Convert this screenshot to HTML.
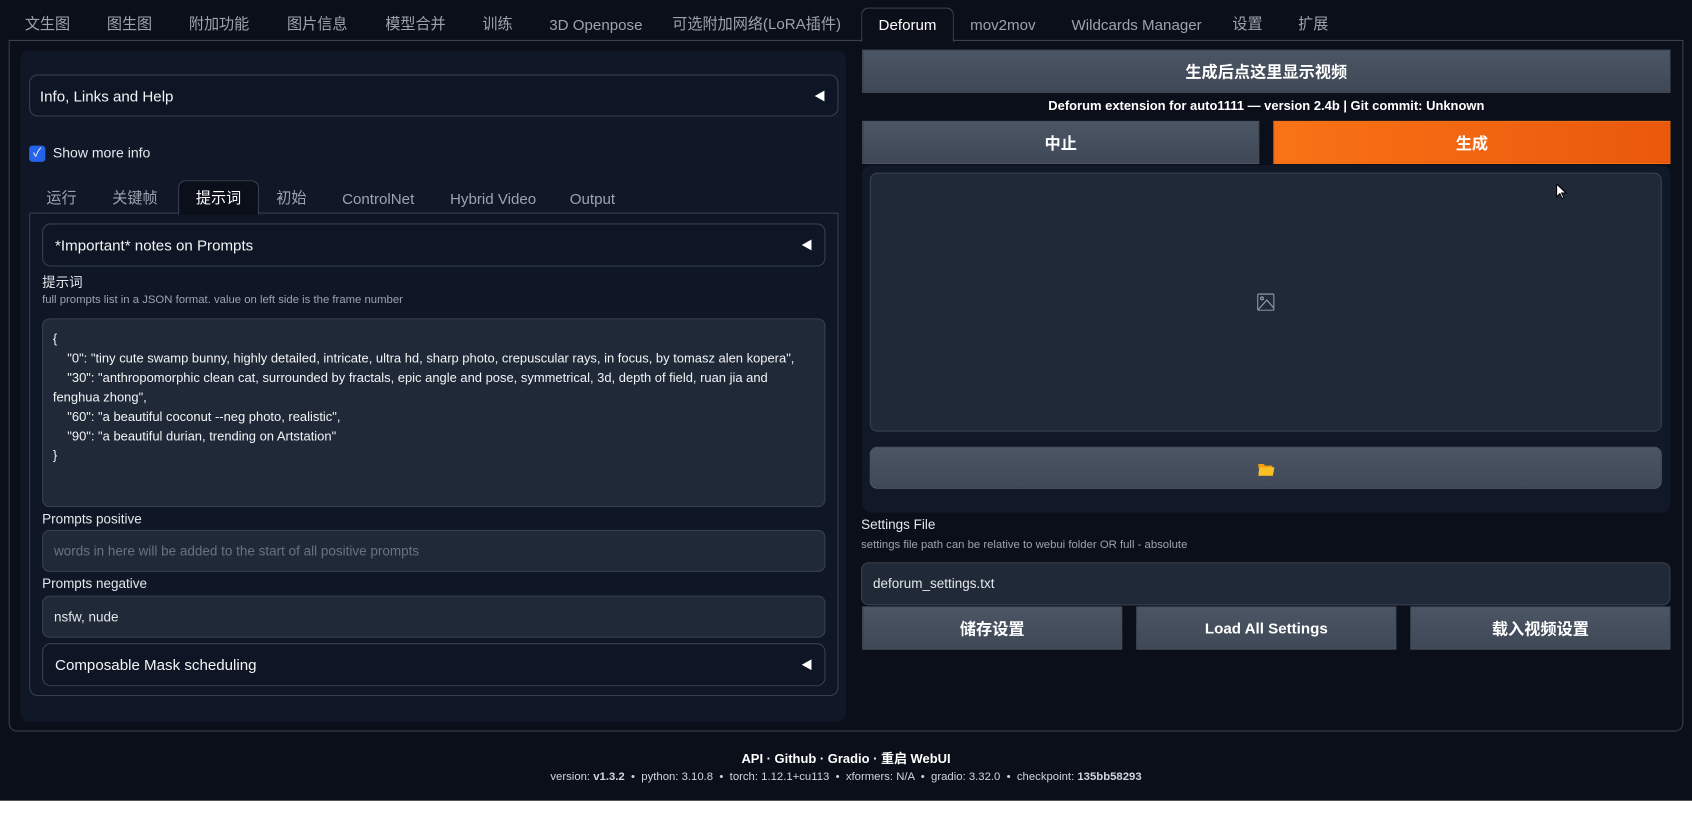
<!DOCTYPE html>
<html><head><meta charset="utf-8"><style>
*{box-sizing:border-box;margin:0;padding:0}
html,body{width:1692px;height:832px;overflow:hidden;background:#fff}
#w{position:absolute;left:0;top:0;width:1568px;height:771px;transform:scale(1.0791);transform-origin:0 0;font-family:"Liberation Sans","Noto Sans CJK SC",sans-serif;color:#e5e7eb}
.bg{position:absolute;left:0;top:0;width:1568px;height:742px;background:#0b0f19}
.a{position:absolute;white-space:nowrap}
.t{font-size:14px;color:#9ca3af;top:12px;line-height:20px;height:20px}
.box{position:absolute;border:1px solid #374151;border-radius:8px}
.acc{position:absolute;border:1px solid #374151;border-radius:8px;background:#0e1524;font-size:14px;color:#f3f4f6;padding-left:11px;display:flex;align-items:center}
.tri{position:absolute;right:12px;top:50%;margin-top:-5px;width:0;height:0;border-top:5px solid transparent;border-bottom:5px solid transparent;border-right:9px solid #fff}
.inp{position:absolute;background:#1f2937;border:1px solid #374151;border-radius:7px;font-size:12.5px;padding-left:10px;display:flex;align-items:center;color:#e5e7eb}
.btn{position:absolute;background:linear-gradient(#4b5563,#3f4856);border:1px solid #4b5563;font-weight:bold;font-size:15px;color:#fff;display:flex;align-items:center;justify-content:center}
.lbl{font-size:12.5px;color:#e5e7eb}
.hint{font-size:10.5px;color:#9ca3af}
</style></head><body><div id="w">
<div class="bg"></div>
<div class="a t" style="left:23px">文生图</div>
<div class="a t" style="left:99px">图生图</div>
<div class="a t" style="left:175px">附加功能</div>
<div class="a t" style="left:266px">图片信息</div>
<div class="a t" style="left:357px">模型合并</div>
<div class="a t" style="left:447px">训练</div>
<div class="a t" style="left:509px;top:13px">3D Openpose</div>
<div class="a t" style="left:623px">可选附加网络(LoRA插件)</div>
<div class="a" style="left:798px;top:7px;width:86px;height:32px;border:1px solid #374151;border-bottom:none;border-radius:7px 7px 0 0;background:#0b0f19;z-index:2;font-size:14px;color:#fff;text-align:center;line-height:30px">Deforum</div>
<div class="a t" style="left:899px;top:13px">mov2mov</div>
<div class="a t" style="left:993px;top:13px">Wildcards Manager</div>
<div class="a t" style="left:1142px">设置</div>
<div class="a t" style="left:1203px">扩展</div>
<div class="box" style="left:8px;top:37px;width:1552px;height:641px;border-radius:0 0 8px 8px"></div>
<div class="a" style="left:19px;top:47px;width:765px;height:622px;background:#101828;border-radius:8px"></div>
<div class="acc" style="left:27px;top:69px;width:750px;height:39px;padding-left:9px">Info, Links and Help<div class="tri"></div></div>
<div class="a" style="left:27px;top:135px;width:15px;height:15px;background:#2563eb;border-radius:3px;color:#fff;font-size:11px;text-align:center;line-height:15px">✓</div>
<div class="a lbl" style="left:49px;top:134px;font-size:13px">Show more info</div>
<div class="a t" style="left:43px;top:173px">运行</div>
<div class="a t" style="left:104px;top:173px">关键帧</div>
<div class="a" style="left:165px;top:167px;width:75px;height:32px;border:1px solid #374151;border-bottom:none;border-radius:7px 7px 0 0;background:#0b0f19;z-index:2;font-size:14px;color:#fff;text-align:center;line-height:30px">提示词</div>
<div class="a t" style="left:256px;top:173px">初始</div>
<div class="a t" style="left:317px;top:174px">ControlNet</div>
<div class="a t" style="left:417px;top:174px">Hybrid Video</div>
<div class="a t" style="left:528px;top:174px">Output</div>
<div class="box" style="left:27px;top:197px;width:750px;height:448px;border-radius:0 0 8px 8px;background:#0f1626"></div>
<div class="acc" style="left:39px;top:207px;width:726px;height:40px">*Important* notes on Prompts<div class="tri"></div></div>
<div class="a lbl" style="left:39px;top:251px">提示词</div>
<div class="a hint" style="left:39px;top:272px">full prompts list in a JSON format. value on left side is the frame number</div>
<div class="a" style="left:39px;top:295px;width:726px;height:175px;background:#1f2937;border:1px solid #374151;border-radius:7px;font-size:12px;line-height:18px;padding:9px 9px;white-space:normal;color:#f3f4f6">{<br>&nbsp;&nbsp;&nbsp;&nbsp;"0": "tiny cute swamp bunny, highly detailed, intricate, ultra hd, sharp photo, crepuscular rays, in focus, by tomasz alen kopera",<br>&nbsp;&nbsp;&nbsp;&nbsp;"30": "anthropomorphic clean cat, surrounded by fractals, epic angle and pose, symmetrical, 3d, depth of field, ruan jia and fenghua zhong",<br>&nbsp;&nbsp;&nbsp;&nbsp;"60": "a beautiful coconut --neg photo, realistic",<br>&nbsp;&nbsp;&nbsp;&nbsp;"90": "a beautiful durian, trending on Artstation"<br>}</div>
<div class="a lbl" style="left:39px;top:474px">Prompts positive</div>
<div class="inp" style="left:39px;top:491px;width:726px;height:39px;color:#6b7280">words in here will be added to the start of all positive prompts</div>
<div class="a lbl" style="left:39px;top:534px">Prompts negative</div>
<div class="inp" style="left:39px;top:552px;width:726px;height:39px">nsfw, nude</div>
<div class="acc" style="left:39px;top:596px;width:726px;height:40px">Composable Mask scheduling<div class="tri"></div></div>
<div class="btn" style="left:799px;top:46px;width:749px;height:40px">生成后点这里显示视频</div>
<div class="a" style="left:799px;top:91px;width:749px;text-align:center;font-size:12px;font-weight:bold;color:#fff">Deforum extension for auto1111 — version 2.4b | Git commit: Unknown</div>
<div class="btn" style="left:799px;top:112px;width:368px;height:40px">中止</div>
<div class="btn" style="left:1180px;top:112px;width:368px;height:40px;background:linear-gradient(90deg,#f97316,#ea580c);border-color:#f97316">生成</div>
<div class="a" style="left:799px;top:153px;width:749px;height:322px;background:#111827;border-radius:8px"></div>
<div class="a" style="left:806px;top:160px;width:734px;height:240px;background:#1f2937;border:1px solid #374151;border-radius:7px"></div>
<svg class="a" style="left:1165px;top:272px" width="16" height="16" viewBox="0 0 16 16" fill="none" stroke="#9ca3af" stroke-width="1"><rect x="0.5" y="0.5" width="15" height="15" rx="1"/><circle cx="4.5" cy="4.5" r="1.3"/><path d="M1 15 L9 6 L15 13"/></svg>
<div class="a" style="left:806px;top:414px;width:734px;height:39px;background:linear-gradient(#4b5563,#3f4856);border:1px solid #4b5563;border-radius:7px"></div>
<svg class="a" style="left:1166px;top:429px" width="15" height="12" viewBox="0 0 15 12"><path d="M0 1h5l1.5 1.5H13v2H0z" fill="#f59e0b"/><path d="M1 4h14l-1.5 8H0z" fill="#fbbf24"/></svg>
<svg class="a" style="left:1442px;top:170px" width="10" height="15" viewBox="0 0 10 15"><path d="M0.5 0.5v12l3-3 2.2 4.5 1.6-.8-2.1-4.3h4.2z" fill="#fff" stroke="#000" stroke-width="1"/></svg>
<div class="a lbl" style="left:798px;top:479px">Settings File</div>
<div class="a hint" style="left:798px;top:499px">settings file path can be relative to webui folder OR full - absolute</div>
<div class="inp" style="left:798px;top:521px;width:750px;height:40px">deforum_settings.txt</div>
<div class="btn" style="left:799px;top:562px;width:241px;height:40px">储存设置</div>
<div class="btn" style="left:1053px;top:562px;width:241px;height:40px;font-size:14px">Load All Settings</div>
<div class="btn" style="left:1307px;top:562px;width:241px;height:40px">载入视频设置</div>
<div class="a" style="left:0;top:694px;width:1568px;text-align:center;font-size:12px;font-weight:bold;color:#fff">API&nbsp;·&nbsp;Github&nbsp;·&nbsp;Gradio&nbsp;·&nbsp;重启 WebUI</div>
<div class="a" style="left:0;top:714px;width:1568px;text-align:center;font-size:10.5px;color:#d1d5db">version: <b>v1.3.2</b> &nbsp;•&nbsp; python: 3.10.8 &nbsp;•&nbsp; torch: 1.12.1+cu113 &nbsp;•&nbsp; xformers: N/A &nbsp;•&nbsp; gradio: 3.32.0 &nbsp;•&nbsp; checkpoint: <b>135bb58293</b></div>
</div></body></html>
